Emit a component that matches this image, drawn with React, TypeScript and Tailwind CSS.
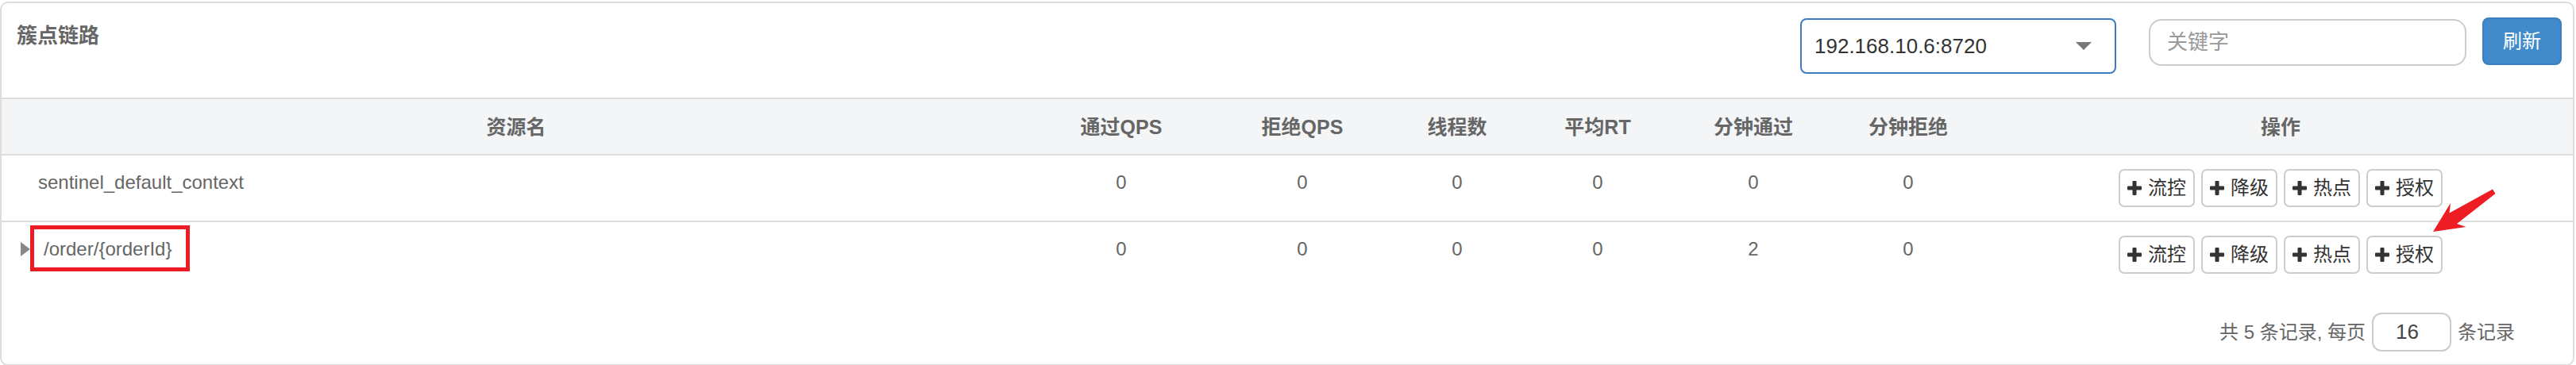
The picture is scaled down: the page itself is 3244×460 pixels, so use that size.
import React from "react";

const cols = "grid grid-cols-[1296px_228px_228px_162px_192px_200px_190px_1fr]";
const headers = ["资源名", "通过QPS", "拒绝QPS", "线程数", "平均RT", "分钟通过", "分钟拒绝", "操作"];
const actions = ["流控", "降级", "热点", "授权"];

function Plus() {
  return (
    <svg width="18" height="18" viewBox="0 0 18 18" className="shrink-0">
      <rect x="0" y="6.5" width="18" height="5" rx="1" fill="#333" />
      <rect x="6.5" y="0" width="5" height="18" rx="1" fill="#333" />
    </svg>
  );
}

function Actions() {
  return (
    <div className="flex justify-center gap-[8px] pt-[17px] pl-[6px]">
      {actions.map((a) => (
        <button
          key={a}
          className="flex h-[48px] w-[96px] items-center gap-[8px] rounded-[7px] border-2 border-[#ccc] bg-white pl-[9px] text-[24px] leading-none text-[#333]"
        >
          <Plus />
          <span>{a}</span>
        </button>
      ))}
    </div>
  );
}

function Row({ name, values, last }: { name: React.ReactNode; values: number[]; last?: boolean }) {
  return (
    <div className={`${cols} ${last ? "h-[82px]" : "h-[84px] border-b-2 border-[#ddd]"} text-[24px] leading-[34px] text-[#666]`}>
      {name}
      {values.map((v, i) => (
        <div key={i} className="pt-[17px] text-center">
          {v}
        </div>
      ))}
      <Actions />
    </div>
  );
}

export default function App() {
  return (
    <div
      className="relative h-[460px] w-[3244px] overflow-hidden bg-white"
      style={{ fontFamily: '"Liberation Sans", "Noto Sans CJK SC", sans-serif' }}
    >
      <div className="mt-[2px] h-[459px] w-[3242px] rounded-[10px] border-2 border-[#ddd]">
        {/* title bar */}
        <div className="flex h-[119px] items-start">
          <div className="mt-[28px] flex-1 pl-[19px] text-[26px] font-bold leading-[26px] text-[#666]">簇点链路</div>
          <div className="mt-[19px] flex h-[70px] w-[398px] items-center justify-between rounded-[8px] border-2 border-[#3c7dc2] pl-[16px] pr-[29px] text-[26px] text-[#333]">
            <span>192.168.10.6:8720</span>
            <svg width="20" height="10" viewBox="0 0 20 10">
              <polygon points="0,0 20,0 10,10" fill="#777" />
            </svg>
          </div>
          <div className="ml-[41px] mt-[20px] flex h-[59px] w-[400px] items-center rounded-[16px] border-2 border-[#ccc] pl-[21px] text-[26px] text-[#999]">
            关键字
          </div>
          <button className="ml-[20px] mr-[14px] mt-[18px] h-[60px] w-[100px] rounded-[8px] border-2 border-[#3a80c0] bg-[#428bca] text-[24px] text-white">
            刷新
          </button>
        </div>

        {/* table header */}
        <div className={`${cols} h-[73px] border-y-2 border-[#ddd] bg-[#f3f5f7] text-[25px] font-bold text-[#666]`}>
          {headers.map((h, i) => (
            <div key={h} className={`flex items-center justify-center pt-[2px] ${i === 7 ? "pl-[6px]" : ""}`}>
              {h}
            </div>
          ))}
        </div>

        <Row name={<div className="pl-[46px] pt-[17px]">sentinel_default_context</div>} values={[0, 0, 0, 0, 0, 0]} />
        <Row
          last
          name={
            <div className="flex items-start pl-[24px] pt-[17px]">
              <svg width="12" height="18" viewBox="0 0 12 18" className="mt-[8px] shrink-0">
                <polygon points="0,0 12,9 0,18" fill="#888" />
              </svg>
              <span className="relative ml-[17px]">
                /order/{"{orderId}"}
                <span className="absolute -left-[17px] -top-[13px] h-[58px] w-[201px] border-[5px] border-[#ed1c24]" />
              </span>
            </div>
          }
          values={[0, 0, 0, 0, 2, 0]}
        />

        {/* pagination */}
        <div className="flex items-center justify-end pr-[73px] pt-[32px] text-[24px] text-[#666]">
          <span>共 5 条记录, 每页</span>
          <div className="mx-[8px] flex h-[49px] w-[100px] items-center rounded-[12px] border-2 border-[#ccc] pl-[28px] text-[26px] text-[#444]">
            16
          </div>
          <span>条记录</span>
        </div>
      </div>

      {/* annotation arrow */}
      <svg className="pointer-events-none absolute left-0 top-0" width="3244" height="460">
        <polygon
          points="3064,292 3086,256 3084.5,268.5 3139,238.5 3142.5,244 3094,282 3105.5,286"
          fill="#ee1d23"
          strokeLinejoin="round"
        />
      </svg>
    </div>
  );
}
